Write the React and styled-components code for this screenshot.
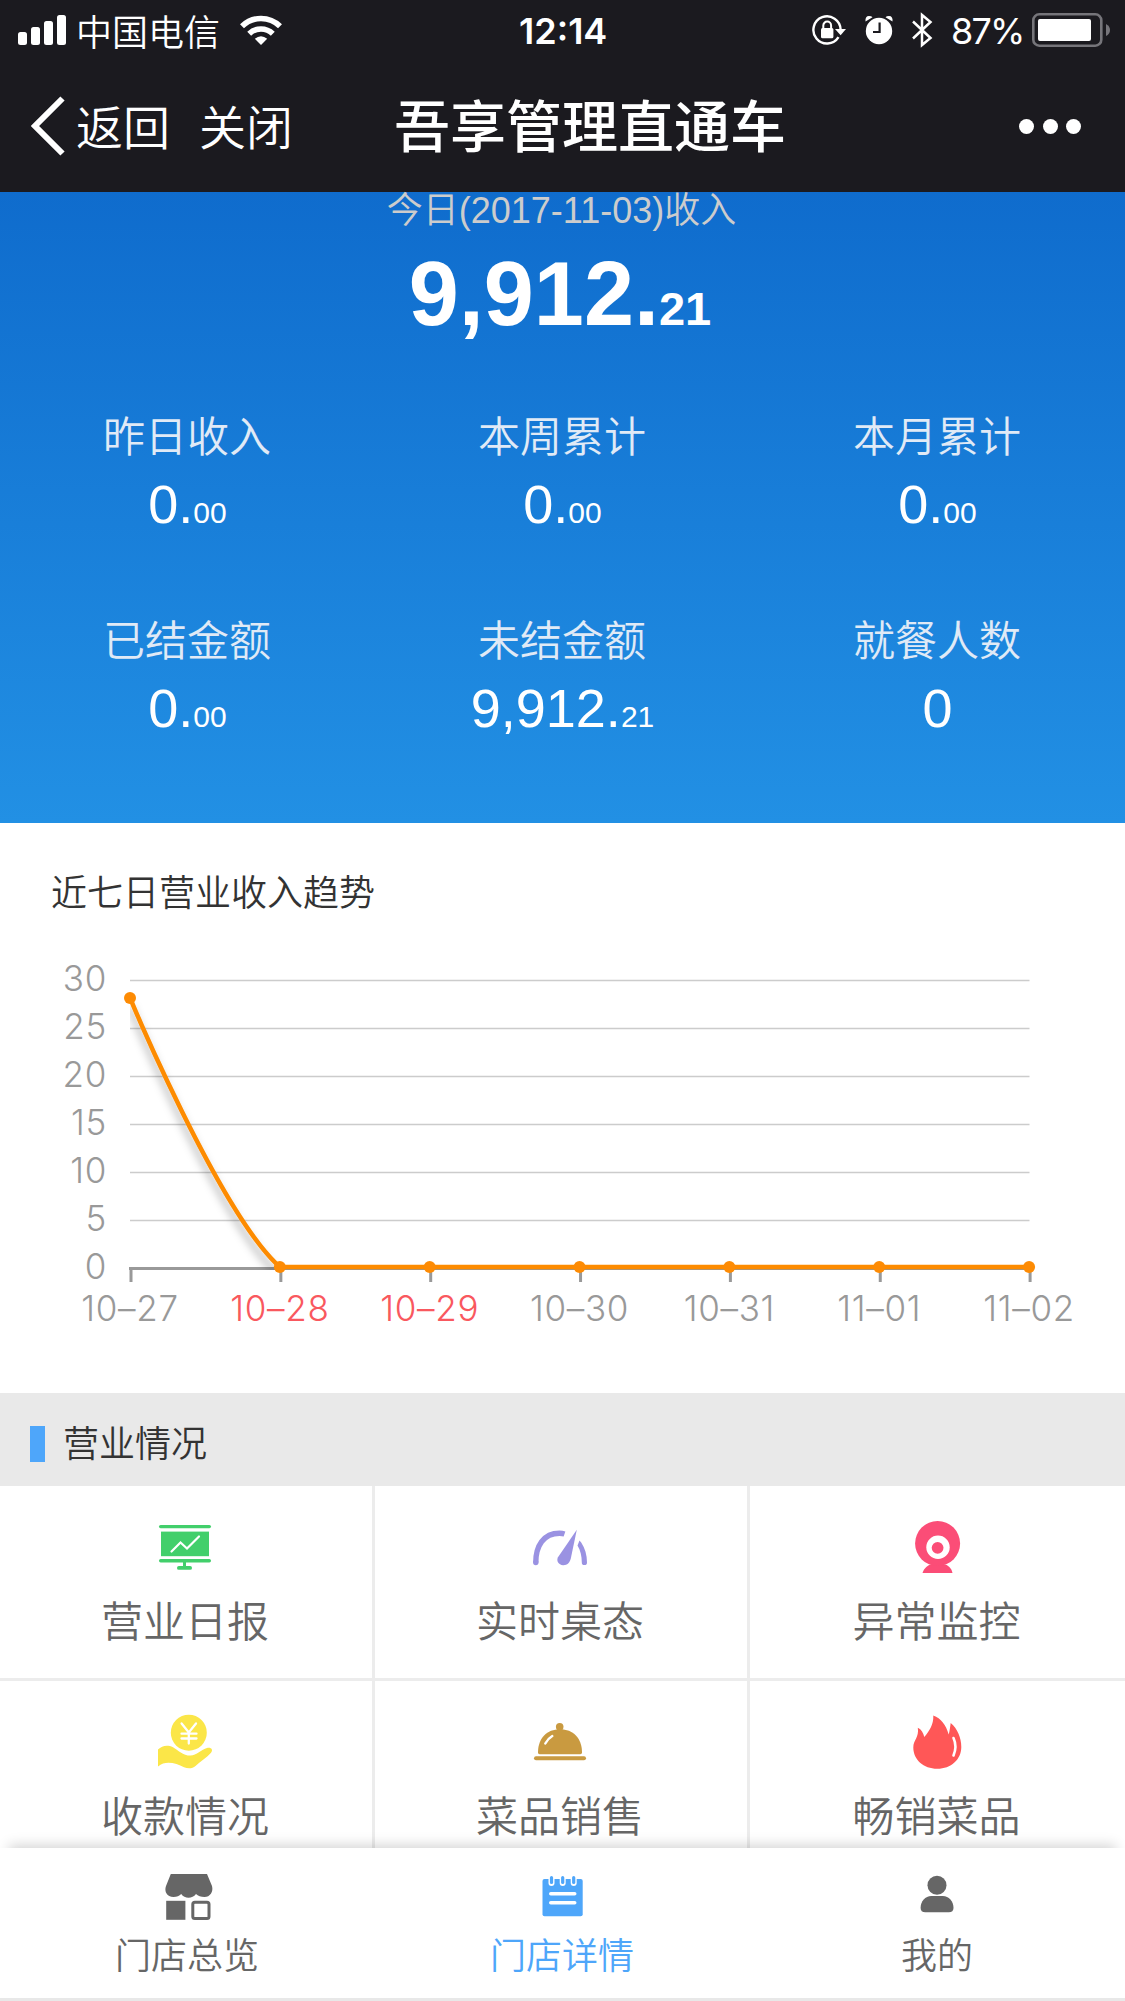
import styled, {createGlobalStyle} from "styled-components";

const colors = {
    bar: "#1b1a1f",
    blue: "#4ea6fa",
    text: "#333",
    gray: "#666",
    axis: "#999",
    line: "#ececec",
    orange: "#fd8b04",
    weekend: "#f9585e",
}

const stats = [
    {label: "昨日收入", value: "0.", cents: "00"},
    {label: "本周累计", value: "0.", cents: "00"},
    {label: "本月累计", value: "0.", cents: "00"},
    {label: "已结金额", value: "0.", cents: "00"},
    {label: "未结金额", value: "9,912.", cents: "21"},
    {label: "就餐人数", value: "0"},
]

const days = [
    {label: "10–27", value: 28},
    {label: "10–28", value: 0, weekend: true},
    {label: "10–29", value: 0, weekend: true},
    {label: "10–30", value: 0},
    {label: "10–31", value: 0},
    {label: "11–01", value: 0},
    {label: "11–02", value: 0},
]

const ReportIcon = () => (
    <svg width="60" height="60" viewBox="0 0 60 60" fill="#42cf6b">
        <rect x="3" y="9" width="52" height="3.2" rx="1.6"/>
        <rect x="5" y="15.6" width="48" height="24.6"/>
        <rect x="3" y="43" width="52" height="3.4" rx="1.7"/>
        <rect x="27" y="45" width="3" height="7"/>
        <rect x="21" y="50" width="15" height="3.8" rx="1.9"/>
        <path d="M15.5 35.5L24.5 26.5L31 32.5L43 20.5" fill="none" stroke="#fff" strokeWidth="2.2" strokeLinecap="round"/>
    </svg>
)

const GaugeIcon = () => (
    <svg width="60" height="60" viewBox="0 0 60 60" fill="#9a92e2">
        <path d="M4.8 46.5C4.8 30 12.5 17.3 28.5 17.3C30.3 17.3 32 17.5 33.5 18" fill="none" stroke="#9a92e2" strokeWidth="5.4"/>
        <circle cx="4.8" cy="46.5" r="2.7"/>
        <path d="M48.5 24.4L50.2 26.5C54 32 56 39 56 46.5A2.5 2.5 0 0 1 50.8 46.5C50.8 40 49.5 34.5 46.5 29.5Z"/>
        <path d="M45.8 13.8L39.8 42.5C38.7 47 36 49.4 32 49.2C27.5 48.7 25.3 45.3 26.8 41.5Z"/>
    </svg>
)

const CameraIcon = () => (
    <svg width="60" height="60" viewBox="0 0 60 60" fill="#fb4d77">
        <path d="M14.5 57C16 52 20 48.8 24 48.3H35.5C40 48.8 43.5 52 44.5 57Z"/>
        <circle cx="29.6" cy="27.5" r="22.5"/>
        <circle cx="30" cy="31.3" r="11.7" fill="#fff"/>
        <circle cx="29.6" cy="31.8" r="5.9"/>
    </svg>
)

const PaymentIcon = () => (
    <svg width="60" height="60" viewBox="0 0 60 60" fill="#fbe648">
        <circle cx="32.8" cy="21.7" r="18"/>
        <path d="M25.6 12.5L32.8 21.5L40 12.5M32.8 21V32.5M25.5 22.7H40.5M25.5 27.5H40.5" fill="none" stroke="#fff" strokeWidth="2.3" strokeLinecap="round"/>
        <path d="M2 38.5C6 34.5 11.5 33.5 17 36.2C22 39 27 44.6 34.5 44.6C40.5 44.6 45.5 38.2 51 37C55 36 57.5 38.6 55 41.8C51 46.5 44 50.5 39.5 55C36.5 57.8 32 58 28 56.2C20 52.5 10 49 2 55.5Z"/>
    </svg>
)

const DishIcon = () => (
    <svg width="60" height="60" viewBox="0 0 60 60" fill="#c99a40">
        <circle cx="28.7" cy="15.8" r="3.8"/>
        <rect x="26.2" y="16" width="5" height="5"/>
        <path d="M8.6 43.3H49.4Q51 43.3 51 41.5C51 27 42 18.3 29 18.3C16 18.3 7 27 7 41.5Q7 43.3 8.6 43.3Z"/>
        <rect x="3" y="45.2" width="52" height="4" rx="2"/>
        <path d="M14.3 32.5Q17 27.5 21.3 25" fill="none" stroke="#fff" strokeWidth="2.4" strokeLinecap="round"/>
    </svg>
)

const FlameIcon = () => (
    <svg width="60" height="60" viewBox="0 0 60 60" fill="#ff5757">
        <path d="M25.3 4.6C33 7.3 38 14 40.7 23.5C41.7 20 42.2 15.5 42.7 12C49.5 17.5 53.3 27 53.3 36C53.3 48.5 43 57.8 29.3 57.8C15.5 57.8 5.3 48.5 5.3 36.5C5.3 29 11.3 26.5 9.8 16.8C13.5 18.5 15.2 22 16.3 26C21.5 20 25.7 13.5 25.3 4.6Z"/>
        <path d="M45.5 27C47.8 32 47.8 39 45.5 44.5" fill="none" stroke="#fff" strokeWidth="2.6" strokeLinecap="round"/>
    </svg>
)

const ShopIcon = () => (
    <svg width="54" height="54" viewBox="0 0 54 54" fill={colors.gray}>
        <path d="M9.8 4H46L51 16C52.6 22 49 27 43.5 27Q38 27 35 24Q32 27.8 27.5 27.8Q23 27.8 20.2 24Q17.5 27 12.5 27C6 27 3 21.5 5 16Z"/>
        <rect x="5.2" y="30.8" width="19.2" height="19"/>
        <rect x="31.8" y="32.2" width="16.2" height="16.2" rx="2" fill="none" stroke={colors.gray} strokeWidth="3"/>
    </svg>
)

const NoteIcon = () => (
    <svg width="54" height="54" viewBox="0 0 54 54" fill={colors.blue}>
        <rect x="6.5" y="9" width="40.2" height="37.2" rx="2"/>
        <g stroke="#fff" strokeWidth="6" strokeLinecap="round">
            <path d="M15.5 6V13"/>
            <path d="M26.7 6V13"/>
            <path d="M37.7 6V13"/>
        </g>
        <g stroke={colors.blue} strokeWidth="3.2" strokeLinecap="round">
            <path d="M15.5 7.7V12.5"/>
            <path d="M26.7 7.7V12.5"/>
            <path d="M37.7 7.7V12.5"/>
        </g>
        <path d="M14.8 23.8H38.7M14.8 32.7H38.7" stroke="#fff" strokeWidth="3.6" strokeLinecap="round"/>
    </svg>
)

const UserIcon = () => (
    <svg width="54" height="54" viewBox="0 0 54 54" fill={colors.gray}>
        <circle cx="26" cy="15.2" r="9.5"/>
        <path d="M9.6 38C9.6 31 14.3 26 20.3 26H31.8C37.8 26 42.5 31 42.5 38Q42.5 42.2 37.8 42.2H14.3Q9.6 42.2 9.6 38Z"/>
    </svg>
)

const modules = [
    {label: "营业日报", Icon: ReportIcon},
    {label: "实时桌态", Icon: GaugeIcon},
    {label: "异常监控", Icon: CameraIcon},
    {label: "收款情况", Icon: PaymentIcon},
    {label: "菜品销售", Icon: DishIcon},
    {label: "畅销菜品", Icon: FlameIcon},
]

const tabs = [
    {label: "门店总览", Icon: ShopIcon},
    {label: "门店详情", Icon: NoteIcon, active: true},
    {label: "我的", Icon: UserIcon},
]

const StatusRow = () => (
    <StatusBar>
        <svg width="48" height="30" viewBox="0 0 48 30" fill="#fff">
            <rect x="0" y="17" width="9" height="13" rx="2.5"/>
            <rect x="13" y="12" width="9" height="18" rx="2.5"/>
            <rect x="26" y="6" width="9" height="24" rx="2.5"/>
            <rect x="39" y="0" width="9" height="30" rx="2.5"/>
        </svg>
        <Carrier>中国电信</Carrier>
        <svg width="42" height="30" viewBox="0 0 42 30" fill="none" stroke="#fff" strokeWidth="5.6">
            <path d="M2 11.3A27 27 0 0 1 40 11.3"/>
            <path d="M9.2 18.7A17 17 0 0 1 32.8 18.7"/>
            <path d="M21 30L14.8 23.8Q21 18.5 27.2 23.8Z" fill="#fff" stroke="none"/>
        </svg>
        <Clock>12:14</Clock>
        <StatusIcons>
            <svg width="34" height="30" viewBox="0 0 34 30" fill="#fff">
                <path d="M28.6 14.5A13.6 13.6 0 1 0 26.5 22.2" fill="none" stroke="#fff" strokeWidth="2.4"/>
                <path d="M23 14H34L28.6 20.3Z"/>
                <rect x="9" y="13" width="12.4" height="10.3" rx="1.5"/>
                <path d="M11.3 14V10.5A3.9 3.9 0 0 1 19.1 10.5V14" fill="none" stroke="#fff" strokeWidth="2"/>
            </svg>
            <svg width="28" height="30" viewBox="0 0 28 30" fill="#fff">
                <circle cx="14" cy="16" r="13.2"/>
                <path d="M0.5 6.5Q0 1 4 1Q6.5 1 7.5 2.2Z"/>
                <path d="M27.5 6.5Q28 1 24 1Q21.5 1 20.5 2.2Z"/>
                <path d="M14.6 7.5V17H8" fill="none" stroke={colors.bar} strokeWidth="2.2"/>
            </svg>
            <svg width="21" height="36" viewBox="0 0 21 36" fill="none" stroke="#fff" strokeWidth="2.5">
                <path d="M1 9.5L18.5 26L10 33V3L18.5 10L1 26.5"/>
            </svg>
        </StatusIcons>
        <Percent>87%</Percent>
        <svg width="78" height="34" viewBox="0 0 78 34">
            <rect x="1.3" y="1.3" width="68" height="31.4" rx="6" fill="none" stroke="#76757a" strokeWidth="2.6"/>
            <rect x="6" y="6" width="53" height="22" rx="2" fill="#fff"/>
            <path d="M74 11Q78 13 78 17Q78 21 74 23Z" fill="#76757a"/>
        </svg>
    </StatusBar>
)

const TrendChart = () => {
    const x = index => 130 + index * 149.85
    const y = value => 352 - value * 9.61
    return (
        <Chart width="1125" height="478" viewBox="0 0 1125 478">
            <defs>
                <clipPath id="plot">
                    <rect x="130" y="60" width="902" height="295"/>
                </clipPath>
                <filter id="shade" x="-10%" y="-10%" width="120%" height="130%">
                    <feDropShadow dx="0" dy="9" stdDeviation="4.5" floodColor="#000" floodOpacity="0.32"/>
                </filter>
            </defs>
            {[30, 25, 20, 15, 10, 5].map((mark, i) => (
                <line key={mark} x1="130" x2="1029.5" y1={65.5 + i * 48} y2={65.5 + i * 48} stroke="#ccc" strokeWidth="1.6"/>
            ))}
            {[30, 25, 20, 15, 10, 5, 0].map((mark, i) => (
                <text key={mark} x="107" y={76 + i * 48} textAnchor="end" fill={colors.axis}>{mark}</text>
            ))}
            <line x1="129" x2="1032" y1="353.5" y2="353.5" stroke={colors.axis} strokeWidth="3"/>
            {days.map((day, i) => (
                <line key={day.label} x1={x(i) + 1} x2={x(i) + 1} y1="353" y2="367" stroke={colors.axis} strokeWidth="3"/>
            ))}
            <g clipPath="url(#plot)">
                <path
                    d={`M${x(0)} ${y(28)}C${x(0)} ${y(28)} 219.6 298 ${x(1)} ${y(0)}L${x(6)} ${y(0)}`}
                    fill="none" stroke={colors.orange} strokeWidth="4.5" filter="url(#shade)"
                />
            </g>
            {days.map((day, i) => (
                <circle key={day.label} cx={x(i)} cy={y(day.value)} r="6" fill={colors.orange}/>
            ))}
            {days.map((day, i) => (
                <text key={day.label} x={x(i)} y="406" textAnchor="middle" fill={day.weekend ? colors.weekend : colors.axis}>
                    {day.label}
                </text>
            ))}
        </Chart>
    )
}

const App = () => (
    <Page>
        <GlobalStyle/>
        <StatusRow/>
        <NavBar>
            <svg width="34" height="60" viewBox="0 0 34 60" fill="none" stroke="#fff" strokeWidth="6">
                <path d="M31.5 2.5L4 30L31.5 57.5"/>
            </svg>
            <NavLink>返回</NavLink>
            <NavLink $close>关闭</NavLink>
            <NavTitle>吾享管理直通车</NavTitle>
            <More><i/><i/><i/></More>
        </NavBar>
        <Hero>
            <Today>今日(2017-11-03)收入</Today>
            <Total>9,912.<span>21</span></Total>
            <StatGrid>
                {stats.map(stat => (
                    <div key={stat.label}>
                        <StatLabel>{stat.label}</StatLabel>
                        <StatValue>{stat.value}{stat.cents && <span>{stat.cents}</span>}</StatValue>
                    </div>
                ))}
            </StatGrid>
        </Hero>
        <Trend>
            <h2>近七日营业收入趋势</h2>
            <TrendChart/>
        </Trend>
        <SectionTitle>营业情况</SectionTitle>
        <ModuleGrid>
            {modules.map(({label, Icon}) => (
                <Module key={label}>
                    <Icon/>
                    <p>{label}</p>
                </Module>
            ))}
        </ModuleGrid>
        <TabBar>
            {tabs.map(({label, Icon, active}) => (
                <Tab key={label} $active={active}>
                    <Icon/>
                    <p>{label}</p>
                </Tab>
            ))}
        </TabBar>
    </Page>
)
export default App;


const GlobalStyle = createGlobalStyle`
  *{
    box-sizing: border-box;
  }
  body{
    margin: 0;
    background: #fff;
    font-family: "Noto Sans CJK SC", sans-serif;
    font-weight: 350;
  }
  h1, h2, p{
    margin: 0;
    font-weight: inherit;
  }
  svg{
    display: block;
    flex-shrink: 0;
  }
`;
const Page = styled.div`
  display: flex;
  flex-direction: column;
  width: 1125px;
  height: 2001px;
  overflow: hidden;
`;
const StatusBar = styled.div`
  display: flex;
  align-items: center;
  flex-shrink: 0;
  height: 60px;
  padding-left: 18px;
  background: ${colors.bar};
  color: #fff;
  font-size: 36px;
  line-height: 40px;
`;
const Carrier = styled.span`
  width: 144px;
  margin: 0 20px 1px 10px;
`;
const Clock = styled.span`
  width: 92px;
  margin: 2px 0 0 237px;
  font-family: Inter, sans-serif;
  font-weight: 600;
  white-space: nowrap;
`;
const StatusIcons = styled.div`
  display: flex;
  align-items: center;
  gap: 19px;
  margin-left: 201px;
`;
const Percent = styled.span`
  width: 81px;
  margin: 2px 0 0 18px;
  font-family: Inter, sans-serif;
  font-weight: 400;
  letter-spacing: -1.8px;
`;
const NavBar = styled.div`
  display: flex;
  align-items: center;
  flex-shrink: 0;
  height: 132px;
  padding: 0 44px 0 31px;
  background: ${colors.bar};
  color: #fff;
`;
const NavLink = styled.span`
  margin: 0 0 2px ${({$close}) => $close ? "29px" : "11px"};
  font-size: 47px;
  line-height: 60px;
`;
const NavTitle = styled.h1`
  margin: 0 0 6px 101px;
  font-size: 56px;
  font-weight: 500;
  line-height: 70px;
`;
const More = styled.div`
  display: flex;
  gap: 8.5px;
  margin-left: auto;
  i{
    width: 15px;
    height: 15px;
    border-radius: 50%;
    background: #fff;
  }
`;
const Hero = styled.div`
  flex-shrink: 0;
  height: 631px;
  background: linear-gradient(#0f6ccd, #2290e4);
  font-family: "Liberation Sans", "Noto Sans CJK SC", sans-serif;
  text-align: center;
  color: #fff;
`;
const Today = styled.p`
  padding-right: 2px;
  font-size: 36px;
  line-height: 38px;
  color: #ccc;
`;
const Total = styled.p`
  margin: 14px 5px 0 0;
  font-size: 90px;
  font-weight: 700;
  line-height: 100px;
  span{
    font-size: 47px;
    line-height: 1;
  }
`;
const StatGrid = styled.div`
  display: grid;
  grid-template-columns: repeat(3, 1fr);
  row-gap: 72px;
  margin-top: 60px;
`;
const StatLabel = styled.p`
  padding-right: 1px;
  font-family: "Noto Sans CJK SC", sans-serif;
  font-size: 42px;
  line-height: 60px;
  color: #e0eaf6;
`;
const StatValue = styled.p`
  margin-top: 8px;
  font-size: 54px;
  line-height: 64px;
  span{
    font-size: 30px;
    line-height: 1;
  }
`;
const Trend = styled.div`
  flex-shrink: 0;
  height: 570px;
  padding-top: 42px;
  h2{
    padding-left: 51px;
    font-size: 36px;
    line-height: 50px;
    color: ${colors.text};
  }
`;
const Chart = styled.svg`
  text{
    font-family: Inter, sans-serif;
    font-size: 35px;
    font-weight: 350;
    letter-spacing: .7px;
  }
`;
const SectionTitle = styled.div`
  display: flex;
  align-items: center;
  flex-shrink: 0;
  height: 93px;
  padding: 3px 0 0 30px;
  background: #e9e9e9;
  color: ${colors.text};
  font-size: 36px;
  line-height: 50px;
  &::before{
    content: "";
    width: 15px;
    height: 36px;
    margin: 6px 18px 0 0;
    background: ${colors.blue};
  }
`;
const ModuleGrid = styled.div`
  display: grid;
  grid-template-columns: repeat(3, 1fr);
  flex: 1;
  min-height: 0;
  overflow: hidden;
`;
const Module = styled.div`
  display: flex;
  flex-direction: column;
  align-items: center;
  height: 195px;
  padding-top: 30px;
  border-right: 3px solid ${colors.line};
  border-bottom: 3px solid ${colors.line};
  &:nth-child(3n){
    border-right: none;
  }
  p{
    margin-top: 13px;
    padding-right: 2px;
    color: ${colors.gray};
    font-size: 42px;
    line-height: 60px;
  }
`;
const TabBar = styled.div`
  position: relative;
  display: grid;
  grid-template-columns: repeat(3, 1fr);
  flex-shrink: 0;
  height: 153px;
  padding-top: 22px;
  border-bottom: 3px solid #e8e8e8;
  background: #fff;
  box-shadow: 0 -12px 12px -9px rgba(0, 0, 0, .17);
`;
const Tab = styled.div`
  display: flex;
  flex-direction: column;
  align-items: center;
  color: ${({$active}) => $active ? colors.blue : colors.gray};
  p{
    margin-top: 4px;
    padding-right: 1px;
    font-size: 36px;
    line-height: 50px;
  }
`;
